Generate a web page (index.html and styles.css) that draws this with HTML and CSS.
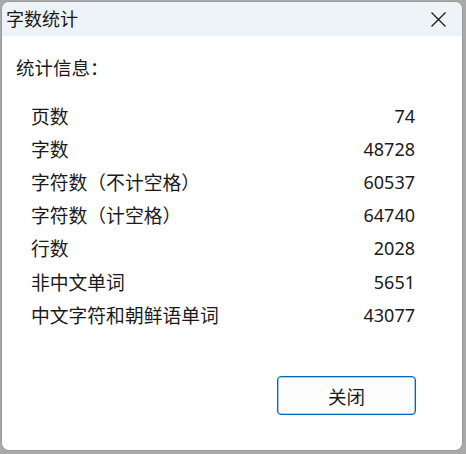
FILE: index.html
```html
<!DOCTYPE html>
<html lang="zh-CN">

<head>
    <meta charset="UTF-8">
    <meta name="viewport" content="width=device-width, initial-scale=1.0">
    <title>字数统计</title>
    <link rel="stylesheet" href="styles.css">
</head>

<body>
    <div class="dialog">
        <!-- Title bar -->
        <div class="titlebar">
            <span class="title">字数统计</span>
            <button class="close-btn" aria-label="关闭">
                <svg width="15" height="15" viewBox="0 0 15 15">
                    <path d="M0.5 0.5 L14.5 14.5 M14.5 0.5 L0.5 14.5" stroke="#1a1a1a" stroke-width="1.3" fill="none"/>
                </svg>
            </button>
        </div>

        <!-- Statistics -->
        <div class="content">
            <div class="section-label">统计信息：</div>
            <div class="stats-list">
                <div class="stat-row"><span class="label">页数</span><span class="num">74</span></div>
                <div class="stat-row"><span class="label">字数</span><span class="num">48728</span></div>
                <div class="stat-row"><span class="label">字符数（不计空格）</span><span class="num">60537</span></div>
                <div class="stat-row"><span class="label">字符数（计空格）</span><span class="num">64740</span></div>
                <div class="stat-row"><span class="label">行数</span><span class="num">2028</span></div>
                <div class="stat-row"><span class="label">非中文单词</span><span class="num">5651</span></div>
                <div class="stat-row"><span class="label">中文字符和朝鲜语单词</span><span class="num">43077</span></div>
            </div>
            <div class="actions">
                <button class="btn-primary">关闭</button>
            </div>
        </div>
    </div>
</body>

</html>
```

FILE: styles.css
```css
/* Base styles */
html, body {
    margin: 0;
    height: 100%;
}

body {
    background-color: #a9a9a9;
    font-family: "Noto Sans", "Noto Sans CJK SC", sans-serif;
    color: #1a1a1a;
    padding: 1px 0 0 1px;
    box-sizing: border-box;
}

/* Dialog window */
.dialog {
    width: 462px;
    height: 450px;
    box-sizing: border-box;
    background: #fff;
    border: 1px solid #9a9a9a;
    border-radius: 8px;
    overflow: hidden;
    display: flex;
    flex-direction: column;
}

.titlebar {
    height: 34px;
    background-color: #eef3f7;
    display: flex;
    align-items: center;
    justify-content: space-between;
    padding: 0 16px 0 4px;
}

.title {
    font-size: 18px;
    line-height: 24px;
}

.close-btn {
    border: none;
    background: none;
    padding: 0;
    width: 15px;
    height: 15px;
    display: flex;
    margin-top: 1px;
}

/* Content */
.content {
    flex: 1;
    display: flex;
    flex-direction: column;
    padding: 20px 46px 0 14px;
}

.section-label {
    font-size: 18.5px;
    line-height: 24px;
}

.stats-list {
    margin: 19px 0 0 15px;
    display: flex;
    flex-direction: column;
}

.stat-row {
    height: 33.2px;
    display: flex;
    align-items: center;
    justify-content: space-between;
    padding-right: 1px;
}

.label {
    font-size: 18.8px;
}

.num {
    font-size: 18px;
}

.actions {
    display: flex;
    justify-content: flex-end;
    margin-top: 45px;
}

.btn-primary {
    width: 139px;
    height: 39px;
    background: #fdfdfd;
    border: 1px solid #0067c0;
    box-shadow: inset 0 0 0 0.6px rgba(0, 103, 192, 0.6);
    border-radius: 4px;
    font-family: "Noto Sans CJK SC", sans-serif;
    font-size: 18.5px;
    color: #1a1a1a;
    padding: 0;
}
```
